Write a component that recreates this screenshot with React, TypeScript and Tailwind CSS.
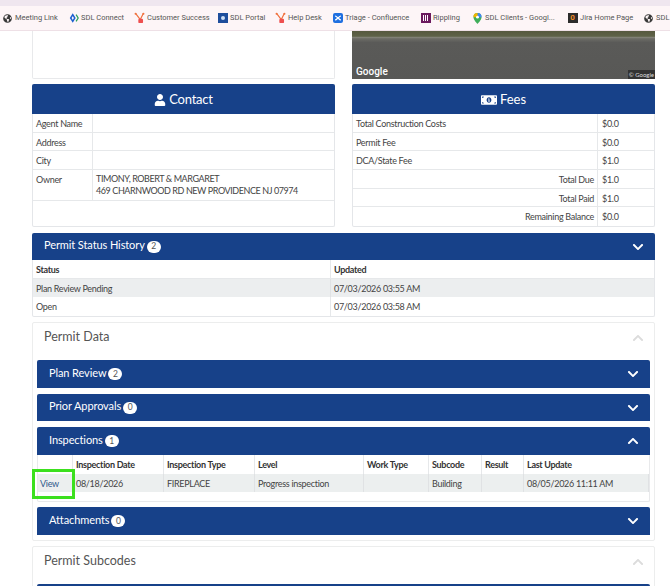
import { FaChevronDown, FaChevronUp, FaGlobeAmericas, FaMoneyBillAlt, FaUser } from 'react-icons/fa';

const Hub = () => (
  <svg width="12" height="12" viewBox="0 0 14 14" fill="none">
    <path d="M2 1l6 8M12 1L8 9" stroke="#f0703c" strokeWidth="1.5" />
    <circle cx="2" cy="1.5" r="1.3" fill="#f0703c" />
    <circle cx="12" cy="1.5" r="1.3" fill="#f0703c" />
    <rect x="5.5" y="8" width="6" height="5.5" rx="1.5" fill="#ee4f4f" />
  </svg>
);

const bookmarks = [
  { label: 'Meeting Link', w: 'w-[66px]', icon: <FaGlobeAmericas className="text-[9px] text-[#3a3a3a]" /> },
  {
    label: 'SDL Connect',
    w: 'w-[66px]',
    icon: (
      <svg width="10" height="10" viewBox="0 0 12 12" fill="none">
        <path d="M4.5 2L2 6l2.5 4L7 6z" stroke="#1d5fd0" strokeWidth="1.8" />
        <path d="M8.5 2L11 6l-2.5 4" stroke="#2aa05a" strokeWidth="1.5" />
      </svg>
    ),
  },
  { label: 'Customer Success', w: 'w-[83px]', icon: <Hub /> },
  {
    label: 'SDL Portal',
    w: 'w-[58px]',
    icon: (
      <div className="flex h-[10px] w-[10px] items-center justify-center bg-[#1e4e9c]">
        <div className="h-1 w-1 rounded-full bg-[#cfe0f5]" />
      </div>
    ),
  },
  { label: 'Help Desk', w: 'w-[57px]', icon: <Hub /> },
  {
    label: 'Triage - Confluence',
    w: 'w-[88px]',
    icon: (
      <div className="flex h-[10px] w-[10px] items-center justify-center rounded-[2px] bg-[#1f6fe0]">
        <svg width="8" height="8" viewBox="0 0 8 8" fill="none">
          <path d="M1 2c2 0 4 4 6 4M1 6c2 0 4-4 6-4" stroke="#fff" strokeWidth="1.2" />
        </svg>
      </div>
    ),
  },
  {
    label: 'Rippling',
    w: 'w-[52px]',
    icon: (
      <div className="flex h-[10px] w-[10px] items-center justify-center gap-px bg-[#6b1a5e]">
        <div className="h-[6px] w-px bg-white" />
        <div className="h-[6px] w-px bg-white" />
        <div className="h-[6px] w-px bg-white" />
      </div>
    ),
  },
  {
    label: 'SDL Clients - Googl...',
    w: 'w-[95px]',
    icon: (
      <svg width="9" height="11" viewBox="0 0 10 12">
        <path d="M5 0a4.5 4.5 0 0 0-4.5 4.5C.5 7.5 5 12 5 12s4.5-4.5 4.5-7.5A4.5 4.5 0 0 0 5 0z" fill="#3fae5a" />
        <path d="M5 0a4.5 4.5 0 0 1 4.5 4.5H5z" fill="#4285f4" />
        <path d="M.5 4.5A4.5 4.5 0 0 1 5 0v4.5z" fill="#f4b400" />
        <circle cx="5" cy="4.5" r="1.6" fill="#fff" />
      </svg>
    ),
  },
  {
    label: 'Jira Home Page',
    w: 'w-[76px]',
    icon: (
      <div className="flex h-[10px] w-[10px] items-center justify-center bg-[#2c2c2c] text-[8px] leading-none font-bold text-[#f08a24]">
        0
      </div>
    ),
  },
  { label: 'SDL', w: 'w-[28px]', icon: <FaGlobeAmericas className="text-[9px] text-[#3a3a3a]" /> },
];

function BlueBar({ title, count, open, className }: { title: string; count: number; open?: boolean; className: string }) {
  return (
    <div className={`flex items-center justify-between rounded-t-[2px] bg-[#174189] text-white ${className}`}>
      <div className="flex items-center gap-[2px] text-[11px] tracking-[-0.1px]">
        <span className="pb-[2px]">{title}</span>
        <span className="flex h-[12px] min-w-[14px] items-center justify-center rounded-full bg-white text-[8.5px] text-[#555]">
          {count}
        </span>
      </div>
      {open ? <FaChevronUp className="text-[12px]" /> : <FaChevronDown className="text-[12px]" />}
    </div>
  );
}

function Row({ label, value, h, right }: { label: string; value: React.ReactNode; h: string; right?: boolean }) {
  return (
    <div className={`flex border-b border-[#e6e8ea] ${h}`}>
      <div className={`w-[245px] border-r border-[#e6e8ea] px-[3px] pt-[3px] ${right ? 'text-right' : ''}`}>{label}</div>
      <div className="pt-[3px] pl-[4px]">{value}</div>
    </div>
  );
}

function ContactRow({ label, value, h }: { label: string; value?: React.ReactNode; h: string }) {
  return (
    <div className={`flex border-b border-[#e6e8ea] ${h}`}>
      <div className="w-[60px] shrink-0 border-r border-[#e6e8ea] px-[3px] pt-[3px]">{label}</div>
      <div className="px-[3px] pt-[3px]">{value}</div>
    </div>
  );
}

const inspectionCols = [
  { head: 'Inspection Date', value: '08/18/2026', w: 'w-[91px]' },
  { head: 'Inspection Type', value: 'FIREPLACE', w: 'w-[91px]' },
  { head: 'Level', value: 'Progress inspection', w: 'w-[109px]' },
  { head: 'Work Type', value: '', w: 'w-[65px]' },
  { head: 'Subcode', value: 'Building', w: 'w-[53px]' },
  { head: 'Result', value: '', w: 'w-[42px]' },
  { head: 'Last Update', value: '08/05/2026 11:11 AM', w: 'flex-1' },
];

export default function App() {
  return (
    <div className="flex h-[586px] w-[670px] flex-col overflow-hidden bg-white font-['Lato','Open_Sans',sans-serif] text-[9px] tracking-[-0.3px] text-[#444]">
      <div className="h-[6px] shrink-0 bg-[#efe6ef]" />
      <div className="flex h-[25px] shrink-0 items-center overflow-hidden border-b border-[#eee0e6] bg-[#fdf5f7] pl-[2px] font-['Roboto',sans-serif] text-[7.5px] tracking-normal text-[#555]">
        {bookmarks.map((b) => (
          <div key={b.label} className={`flex shrink-0 items-center gap-[2px] whitespace-nowrap ${b.w}`}>
            <span className="flex w-[11px] shrink-0 justify-center">{b.icon}</span>
            <span>{b.label}</span>
          </div>
        ))}
      </div>

      <div className="flex flex-col px-[32px] pr-[15px]">
        {/* map + blank card */}
        <div className="flex gap-[17px]">
          <div className="h-[48px] w-[303px] rounded-b-[2px] border border-t-0 border-[#e8e9eb] bg-white" />
          <div className="relative h-[48px] w-[303px] overflow-hidden bg-[linear-gradient(180deg,#56593f_0%,#5e6248_11%,#85857a_13%,#6c6c66_16%,#5a5a58_24%,#585856_100%)]">
            <span className="absolute bottom-0 left-[4px] font-['Roboto',sans-serif] text-[10px] font-medium tracking-normal text-white">Google</span>
            <span className="absolute right-0 bottom-0 bg-[#333] px-[1px] text-[6px] tracking-normal text-[#ddd]">© Google</span>
          </div>
        </div>

        {/* contact + fees */}
        <div className="mt-[5px] flex gap-[17px]">
          <div className="flex h-[143px] w-[303px] flex-col rounded-[2px] border-x border-b border-[#e4e6e9]">
            <div className="-mx-px flex h-[30px] items-center justify-center gap-[3px] rounded-t-[2px] bg-[#174189] pt-[1px] text-[13px] tracking-[-0.2px] text-white">
              <FaUser className="text-[12px]" />
              <span>Contact</span>
            </div>
            <ContactRow label="Agent Name" h="h-[19px]" />
            <ContactRow label="Address" h="h-[18px]" />
            <ContactRow label="City" h="h-[19px]" />
            <ContactRow
              label="Owner"
              h="h-[31px]"
              value={
                <div className="leading-[12px] tracking-[-0.42px]">
                  <div>TIMONY, ROBERT &amp; MARGARET</div>
                  <div>469 CHARNWOOD RD NEW PROVIDENCE NJ 07974</div>
                </div>
              }
            />
          </div>
          <div className="flex h-[143px] w-[303px] flex-col rounded-[2px] border-x border-b border-[#e4e6e9]">
            <div className="-mx-px flex h-[30px] items-center justify-center gap-[3px] rounded-t-[2px] bg-[#174189] pt-[1px] text-[13px] tracking-normal text-white">
              <FaMoneyBillAlt className="text-[16px]" />
              <span>Fees</span>
            </div>
            <Row label="Total Construction Costs" value="$0.0" h="h-[19px]" />
            <Row label="Permit Fee" value="$0.0" h="h-[18px]" />
            <Row label="DCA/State Fee" value="$1.0" h="h-[19px]" />
            <Row label="Total Due" value="$1.0" h="h-[19px]" right />
            <Row label="Total Paid" value="$1.0" h="h-[18px]" right />
            <Row label="Remaining Balance" value="$0.0" h="h-[19px] border-b-0" right />
          </div>
        </div>

        {/* status history */}
        <div className="mt-[6px] h-[84px] rounded-[2px] border-x border-b border-[#e4e6e9]">
          <BlueBar title="Permit Status History" count={2} className="-mx-px h-[27px] pr-[11px] pl-[12px]" />
          <div className="flex h-[19px] border-b border-[#e6e8ea] font-bold text-[#333]">
            <div className="w-[298px] border-r border-[#e6e8ea] px-[3px] pt-[3px]">Status</div>
            <div className="px-[3px] pt-[3px]">Updated</div>
          </div>
          <div className="flex h-[18px] bg-[#eceeef]">
            <div className="w-[298px] border-r border-[#e0e2e4] px-[3px] pt-[3px]">Plan Review Pending</div>
            <div className="px-[3px] pt-[3px]">07/03/2026 03:55 AM</div>
          </div>
          <div className="flex h-[19px]">
            <div className="w-[298px] border-r border-[#e6e8ea] px-[3px] pt-[3px]">Open</div>
            <div className="px-[3px] pt-[3px]">07/03/2026 03:58 AM</div>
          </div>
        </div>

        {/* permit data */}
        <div className="mt-[5px] flex h-[219px] flex-col rounded-[2px] border border-[#eceded] px-[4px]">
          <div className="flex h-[37px] items-center justify-between pr-[6px] pb-[8px] pl-[7px] text-[12.5px] tracking-normal text-[#555]">
            <span>Permit Data</span>
            <FaChevronUp className="text-[12px] text-[#dcdcdc]" />
          </div>
          <BlueBar title="Plan Review" count={2} className="h-[28px] pr-[11px] pl-[12px]" />
          <BlueBar title="Prior Approvals" count={0} className="mt-[6px] h-[27px] pr-[11px] pl-[12px]" />
          <div className="mt-[6px] h-[75px] rounded-[2px] border-x border-b border-[#e8e9eb]">
            <BlueBar title="Inspections" count={1} open className="-mx-px h-[28px] pr-[11px] pl-[12px]" />
            <div className="flex h-[19px] font-bold text-[#333]">
              <div className="w-[35px] shrink-0 border-r border-[#e6e8ea]" />
              {inspectionCols.map((c) => (
                <div key={c.head} className={`${c.w} shrink-0 border-r border-[#e6e8ea] px-[3px] pt-[3px] last:border-r-0`}>
                  {c.head}
                </div>
              ))}
            </div>
            <div className="relative flex h-[18px] bg-[#ecefef]">
              <div className="w-[35px] shrink-0 border-r border-[#e0e2e4] pt-[3px] pl-[2px] text-[#2c5a8c]">View</div>
              {inspectionCols.map((c) => (
                <div key={c.head} className={`${c.w} shrink-0 border-r border-[#e0e2e4] px-[3px] pt-[3px] last:border-r-0`}>
                  {c.value}
                </div>
              ))}
              {/* green annotation box from the screenshot */}
              <div className="absolute top-[-5px] left-[-6px] h-[30px] w-[43px] border-[3px] border-[#3ce01e]" />
            </div>
          </div>
          <BlueBar title="Attachments" count={0} className="mt-[5px] h-[28px] pr-[11px] pl-[12px]" />
        </div>

        {/* permit subcodes */}
        <div className="mt-[5px] flex h-[60px] flex-col rounded-[2px] border border-[#eceded] px-[4px]">
          <div className="flex h-[37px] shrink-0 items-center justify-between pr-[6px] pb-[8px] pl-[7px] text-[12.5px] tracking-normal text-[#555]">
            <span>Permit Subcodes</span>
            <FaChevronUp className="text-[12px] text-[#dcdcdc]" />
          </div>
          <div className="h-[10px] rounded-t-[2px] bg-[#174189]" />
        </div>
      </div>
    </div>
  );
}
